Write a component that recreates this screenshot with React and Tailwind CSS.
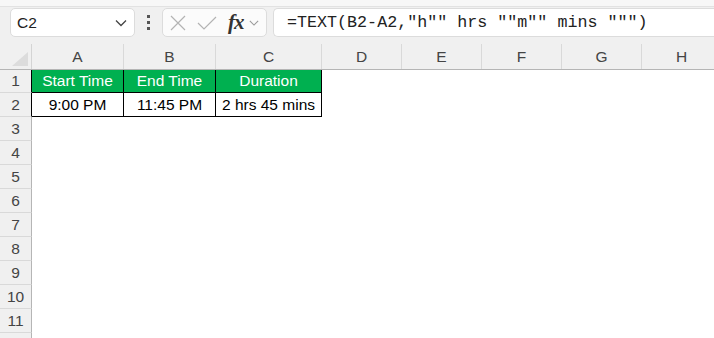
import React from 'react';

const cols = [
  { l: 'A', w: 92 },
  { l: 'B', w: 92 },
  { l: 'C', w: 106 },
  { l: 'D', w: 80 },
  { l: 'E', w: 80 },
  { l: 'F', w: 80 },
  { l: 'G', w: 80 },
  { l: 'H', w: 80 },
];

const data = [
  ['Start Time', 'End Time', 'Duration'],
  ['9:00 PM', '11:45 PM', '2 hrs 45 mins'],
];

const Chevron = ({ className }) => (
  <svg width="12" height="8" viewBox="0 0 12 8" className={className}>
    <path d="M1 1.5 L6 6.5 L11 1.5" fill="none" stroke="currentColor" strokeWidth="1.3" />
  </svg>
);

const App = () => {
  const rows = Array.from({ length: 12 }, (_, i) => i + 1);
  return (
    <div className="w-[714px] h-[338px] overflow-hidden bg-white font-['Liberation_Sans',sans-serif]">
      {/* toolbar */}
      <div className="bg-[#f0f0f0]">
        <div className="h-[7px] bg-[#f7f7f7] border-b border-[#e2e2e2]" />
        <div className="flex items-center h-[31px] pl-[10px]">
          <div className="w-[125px] h-[29px] bg-white border border-[#dcdcdc] rounded-[5px] flex items-center justify-between pl-[6px] pr-[7px]">
            <span className="text-[15.5px] text-[#222]">C2</span>
            <Chevron className="text-[#444]" />
          </div>
          <div className="w-[27px] flex flex-col items-center gap-[3px]">
            <span className="w-[3px] h-[3px] bg-[#555]" />
            <span className="w-[3px] h-[3px] bg-[#555]" />
            <span className="w-[3px] h-[3px] bg-[#555]" />
          </div>
          <div className="w-[105px] h-[29px] bg-[#fbfbfb] border border-[#dcdcdc] rounded-[5px] flex items-center pl-[7px]">
            <svg width="16" height="16" viewBox="0 0 16 16">
              <path d="M1 1 L15 15 M15 1 L1 15" stroke="#b3b3b3" strokeWidth="1.2" fill="none" />
            </svg>
            <svg width="20" height="16" viewBox="0 0 20 16" className="ml-[11px]">
              <path d="M1 8 L7 14 L19 2" stroke="#b3b3b3" strokeWidth="1.2" fill="none" />
            </svg>
            <span className="ml-[11px] font-['Liberation_Serif',serif] italic text-[21px] leading-none text-[#333] font-semibold tracking-[-1px]">fx</span>
            <Chevron className="ml-[5px] text-[#9a9a9a] w-[10px]" />
          </div>
          <div className="ml-[6px] flex-1 h-[29px] bg-white border border-[#dcdcdc] rounded-l-[5px] border-r-0 flex items-center pl-[13px]">
            <span className="font-['Liberation_Mono',monospace] text-[16.7px] text-[#222] whitespace-pre">=TEXT(B2-A2,"h"" hrs ""m"" mins """)</span>
          </div>
        </div>
        <div className="h-[6px]" />
      </div>

      {/* column headers */}
      <div className="flex h-[26px] bg-[#f0f0f0] border-b border-[#b5b5b5]">
        <div className="w-[32px] shrink-0 relative border-r border-[#d4d4d4]">
          <svg width="16" height="14" viewBox="0 0 16 14" className="absolute right-[3px] bottom-[3px]">
            <path d="M16 0 L16 14 L0 14 Z" fill="#dcdcdc" />
          </svg>
        </div>
        {cols.map((c) => (
          <div
            key={c.l}
            style={{ width: c.w }}
            className="shrink-0 border-r border-[#d9d9d9] flex items-center justify-center text-[15.5px] text-[#444]"
          >
            {c.l}
          </div>
        ))}
      </div>

      {/* rows */}
      {rows.map((r) => (
        <div key={r} className={`flex ${r === 1 ? 'h-[23px]' : 'h-[24px]'}`}>
          <div
            className={`w-[32px] shrink-0 bg-[#f0f0f0] border-b border-[#d9d9d9] border-r flex items-center justify-center text-[15.5px] text-[#444] ${
              r <= 2 ? 'border-r-black' : 'border-r-[#b5b5b5]'
            }`}
          >
            {r <= 11 ? r : ''}
          </div>
          {cols.map((c, ci) => {
            const inTable = r <= 2 && ci < 3;
            const v = inTable ? data[r - 1][ci] : null;
            return (
              <div
                key={c.l}
                style={{ width: c.w }}
                className={`shrink-0 flex items-center justify-center text-[15.5px] whitespace-nowrap ${
                  inTable ? 'border-r border-b border-black' : ''
                } ${r === 1 && inTable ? 'bg-[#00b050] text-white' : 'text-black'}`}
              >
                {v}
              </div>
            );
          })}
        </div>
      ))}
    </div>
  );
};

export default App;
